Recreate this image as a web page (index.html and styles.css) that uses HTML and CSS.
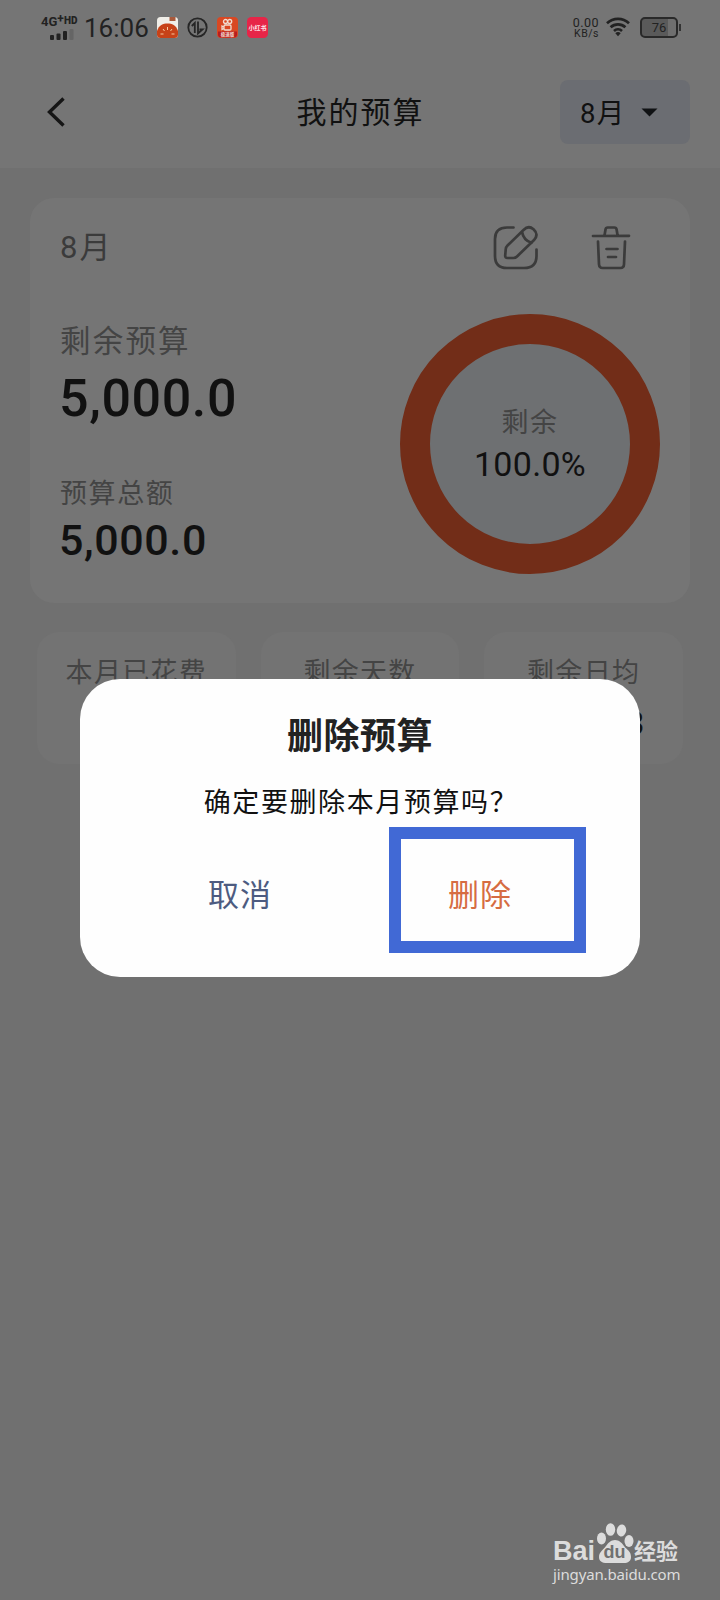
FILE: index.html
```html
<!DOCTYPE html>
<html lang="zh-CN">
<head>
<meta charset="utf-8">
<title>我的预算</title>
<link rel="stylesheet" href="styles.css">
</head>
<body>
<div class="screen">
  <div class="status">
    <div class="network">
      <div class="network-type">4G<sup>+</sup><b>HD</b></div>
      <svg class="signal" width="24" height="11" viewBox="0 0 24 11"><g fill="#222"><rect y="6" width="4" height="5" rx="1"/><rect x="6.500" y="4.500" width="4" height="6.500" rx="1"/><rect x="13" y="2" width="4" height="9" rx="1"/></g><rect x="19.500" width="4" height="11" rx="1" fill="#656565"/></svg>
    </div>
    <div class="clock">16:06</div>
    <svg class="app app-sun" width="21" height="21" viewBox="0 0 21 21"><rect width="21" height="21" rx="3.500" fill="#f0eee8"/><path d="M12.500 0h6v4h-6z" fill="#a85a3c"/><path d="M0 14C2 8 6 6.500 10.500 6.500S19 8 21 14v3.500a3.500 3.500 0 0 1-3.500 3.500h-14A3.500 3.500 0 0 1 0 17.500z" fill="#c74218"/><path d="M10.500 10v3M6 12l1.500 2M15 12l-1.500 2M3.500 17h3M14.500 17h3" stroke="#f6cba0" stroke-width="1"/></svg>
    <svg class="app app-line" width="21" height="21" viewBox="0 0 21 21" fill="none" stroke="#262626" stroke-width="1.800"><circle cx="10.500" cy="10.500" r="9.200"/><path d="M4.800 9l3-3v10M11 4.500v12l4.500-4h-3"/></svg>
    <svg class="app app-video" width="21" height="21" viewBox="0 0 21 21"><rect width="21" height="21" rx="4" fill="#d94823"/><path d="M1 14.500h19v3a3 3 0 0 1-3 3H4a3 3 0 0 1-3-3z" fill="#b71d20"/><g fill="none" stroke="#f1ded2" stroke-width="1.300"><circle cx="8.500" cy="4.500" r="2"/><circle cx="12.700" cy="4.500" r="2"/><rect x="7" y="8" width="7" height="5" rx="1"/><path d="M7 10L5 9v3.500l2-1"/></g><text x="10.500" y="19.200" text-anchor="middle" class="app-tag">极速版</text></svg>
    <svg class="app app-red" width="21" height="21" viewBox="0 0 21 21"><rect width="21" height="21" rx="4.500" fill="#e72548"/><text x="10.500" y="12.800" text-anchor="middle" class="app-word">小红书</text></svg>
    <div class="status-right">
      <div class="speed"><span>0.00</span><span class="unit">KB/s</span></div>
      <svg width="24" height="20" viewBox="0 0 24 20" fill="none" stroke="#222" stroke-width="2.700"><path d="M1 6.200a16 16 0 0 1 22 0M4.600 10.300a10.800 10.800 0 0 1 14.800 0M8 14a6 6 0 0 1 8 0"/><path d="M9.300 16.200a4.200 4.200 0 0 1 5.400 0L12 19.300z" fill="#222" stroke="none"/></svg>
      <div class="battery">76</div>
    </div>
  </div>

  <header class="header">
    <svg class="back" width="20" height="32" viewBox="0 0 20 32" fill="none" stroke="#151515" stroke-width="3.400"><path d="M17.500 2.500L3.500 16l14 13.500"/></svg>
    <h1 class="title">我的预算</h1>
    <div class="month-select"><span>8月</span><svg width="17" height="9" viewBox="0 0 17 9"><path d="M.5.500h16L8.500 8.500z" fill="#101214"/></svg></div>
  </header>

  <main class="content">
    <section class="card">
      <div class="card-head">
        <span class="card-month">8月</span>
        <svg class="edit" width="46" height="46" viewBox="0 0 46 46" fill="none" stroke="#3b3b3b" stroke-width="2.700" stroke-linecap="round" stroke-linejoin="round"><path d="M20.500 2.500H14Q2 2.500 2 14v17q0 12 12 12h17q12.500 0 12.500-12v-6.500"/><path d="M14.500 20.500L30.500 5q5-5 10-.8 5.500 5 .8 10.500L24 31.500q-1.500 1.500-3.500 1.500h-6q-2.500 0-2.300-2.500l.5-6q.2-2.500 1.800-4zM29 6.800q1.500 8.700 9.500 11"/></svg>
        <svg class="trash" width="40" height="46" viewBox="0 0 40 46" fill="none" stroke="#3b3b3b" stroke-width="2.700" stroke-linecap="round" stroke-linejoin="round"><path d="M2 11l36-.2M13.500 10.500l1-6q.3-2 2.300-2h6.500q2 0 2.300 2l1 6M7 16.500l1 23q.3 3.500 3.500 3.500h18q3.300 0 3.500-3.500l1-23M15.500 24h11M17 32h8"/></svg>
      </div>
      <div class="card-body">
        <div class="amounts">
          <div class="label label-lg">剩余预算</div>
          <div class="amount amount-lg">5,000.0</div>
          <div class="label label-total">预算总额</div>
          <div class="amount">5,000.0</div>
        </div>
        <div class="ring">
          <div class="ring-label">剩余</div>
          <div class="ring-value">100.0%</div>
        </div>
      </div>
    </section>
    <section class="stats">
      <div class="stat"><span>本月已花费</span></div>
      <div class="stat"><span>剩余天数</span></div>
      <div class="stat"><span>剩余日均</span><b>208.33</b></div>
    </section>
  </main>

  <div class="dialog">
    <h2 class="dialog-title">删除预算</h2>
    <p class="dialog-text">确定要删除本月预算吗？</p>
    <div class="actions">
      <span class="cancel">取消</span>
      <span class="delete">删除</span>
    </div>
    <div class="highlight"></div>
  </div>

  <div class="watermark">
    <div class="brand">
      <span class="bai">Bai</span>
      <span class="paw"><svg width="38" height="40" viewBox="0 0 38 40" fill="#dcdcdc"><ellipse cx="5.500" cy="15.500" rx="4.500" ry="6"/><ellipse cx="14.500" cy="6.500" rx="4.700" ry="6.300"/><ellipse cx="25.500" cy="7.500" rx="4.700" ry="6" transform="rotate(10 25.500 7.500)"/><ellipse cx="33" cy="18" rx="4.500" ry="6"/><path d="M19 17c4 0 7 3 9 6 3 4 7 5 7 11 0 4-3 6-7 6H11c-5 0-8-2-8-6 0-5 4-7 7-11 2-3 5-6 9-6z"/></svg><i>du</i></span>
      <span class="jingyan">经验</span>
    </div>
    <div class="url">jingyan.baidu.com</div>
  </div>
</div>
</body>
</html>
```
FILE: styles.css
```css
* { box-sizing: border-box; }
body { margin: 0; font-family: Roboto, "Noto Sans CJK SC", sans-serif; color: #111; }
h1, h2, p { margin: 0; font-weight: 400; }
svg { display: block; flex: none; }
.screen { position: relative; width: 720px; height: 1600px; background: #707070; overflow: hidden; }

.status { display: flex; align-items: flex-start; height: 56px; padding: 0 41px; background: #757575; color: #222; }
.network { width: 38px; padding-top: 15px; }
.network-type { display: flex; height: 14px; font: 700 13px/14px Roboto, sans-serif; white-space: nowrap; }
.network-type sup { font-size: 12px; line-height: 9px; }
.network-type b { font-size: 10px; line-height: 11px; }
.signal { margin: 0 0 0 9px; }
.clock { width: 78px; padding: 14px 0 0 5px; font-size: 26px; line-height: 29px; white-space: nowrap; }
.app { margin-top: 17px; }
.app-line, .app-video, .app-red { margin-left: 9px; }
.app-tag { font-size: 4.5px; font-weight: 700; fill: #f1ded2; }
.app-word { font-size: 6px; font-weight: 700; fill: #ffe6ea; }
.status-right { display: flex; margin-left: auto; padding-top: 17px; }
.speed { display: flex; flex-direction: column; align-items: flex-end; margin-right: 7px; font-size: 12.5px; line-height: 12px; letter-spacing: 0.5px; }
.unit { font-size: 10.5px; line-height: 10px; }
.battery { position: relative; width: 38px; height: 21px; margin: 0 1px 0 10px; border: 2px solid #292929; border-radius: 5px; background: linear-gradient(90deg, #5a5a5a 26px, #6f6f6f 26px); font-size: 13px; line-height: 17px; text-align: center; }
.battery::after { content: ""; position: absolute; right: -5px; top: 5px; width: 2px; height: 7px; background: #333; }

.header { display: grid; grid-template-columns: 130px 1fr 130px; align-items: center; height: 112px; padding: 0 30px 0 46px; background: #757575; }
.title { margin-left: -15px; padding-top: 2px; font-size: 30px; line-height: 40px; letter-spacing: 2px; text-align: center; }
.month-select { display: flex; align-items: center; justify-content: space-between; height: 64px; padding: 0 32px 0 20px; border-radius: 8px; background: #6b6d72; font-size: 27.5px; line-height: 40px; letter-spacing: 1.2px; }
.month-select span { padding-top: 3px; }

.content { padding: 30px 30px 0; }
.card { height: 405px; padding: 20px 30px 0; border-radius: 24px; background: #757575; }
.card-head { display: flex; align-items: center; height: 60px; }
.card-month { font-size: 31px; line-height: 40px; letter-spacing: 2px; color: #3b3b3b; }
.edit { margin-left: auto; }
.trash { margin: 0 29px 0 52px; }
.card-body { display: flex; justify-content: space-between; padding-top: 36px; }
.amounts { padding-top: 8px; }
.label { font-size: 27px; line-height: 36px; letter-spacing: 1.6px; color: #444; }
.label-lg { font-size: 30.5px; line-height: 40px; letter-spacing: 2.2px; }
.amount { margin-left: -1px; font-size: 43px; line-height: 50px; font-weight: 500; letter-spacing: 0.6px; }
.amount-lg { margin-top: 7px; font-size: 52px; line-height: 60px; letter-spacing: 0.6px; }
.label-total { margin: 47px 0 3px; }
.ring { display: flex; flex-direction: column; align-items: center; width: 260px; height: 260px; padding-top: 60px; border: 30px solid #722d18; border-radius: 50%; background: #6e7072; }
.ring-label { font-size: 27px; line-height: 38px; letter-spacing: 1.6px; color: #444; }
.ring-value { margin-top: 2px; font-size: 34px; line-height: 40px; letter-spacing: 0.3px; }

.stats { display: grid; grid-template-columns: repeat(3, 1fr); gap: 25px; margin-top: 29px; padding: 0 7px; }
.stat { display: flex; flex-direction: column; align-items: center; height: 132px; padding-top: 22px; border-radius: 22px; background: #737373; color: #444; font-size: 27px; line-height: 38px; letter-spacing: 1.3px; white-space: nowrap; }
.stat b { margin-top: 14px; padding-left: 11px; font-size: 33px; line-height: 36px; font-weight: 700; color: #111; }

.dialog { position: absolute; left: 80px; top: 679px; width: 560px; height: 298px; padding-top: 33px; border-radius: 40px; background: #fefefe; text-align: center; }
.dialog-title { font-size: 36px; line-height: 50px; font-weight: 700; letter-spacing: 0.5px; color: #222; }
.dialog-text { margin-top: 21px; padding-left: 2px; font-size: 27px; line-height: 40px; letter-spacing: 1.6px; }
.actions { display: flex; justify-content: center; gap: 176px; margin-top: 51px; font-size: 31px; line-height: 44px; letter-spacing: 1px; }
.cancel { color: #4d5b80; }
.delete { color: #d66c42; }
.highlight { position: absolute; left: 309.4px; top: 148.4px; width: 197px; height: 126px; border: 12px solid #4169d5; }

.watermark { position: absolute; left: 553px; top: 1523px; color: #dcdcdc; }
.brand { display: flex; height: 40px; align-items: flex-end; }
.bai { width: 43px; font: 700 27px/24px "Liberation Sans", sans-serif; }
.paw { position: relative; width: 38px; height: 40px; }
.paw i { position: absolute; left: 0; right: 1px; top: 20px; color: #707070; font: 700 18px/18px "Liberation Sans", sans-serif; text-align: center; }
.jingyan { font-size: 22px; line-height: 22px; font-weight: 700; }
.url { margin-top: 2px; font: 15px/18px "Noto Sans", sans-serif; letter-spacing: -0.15px; }
```
